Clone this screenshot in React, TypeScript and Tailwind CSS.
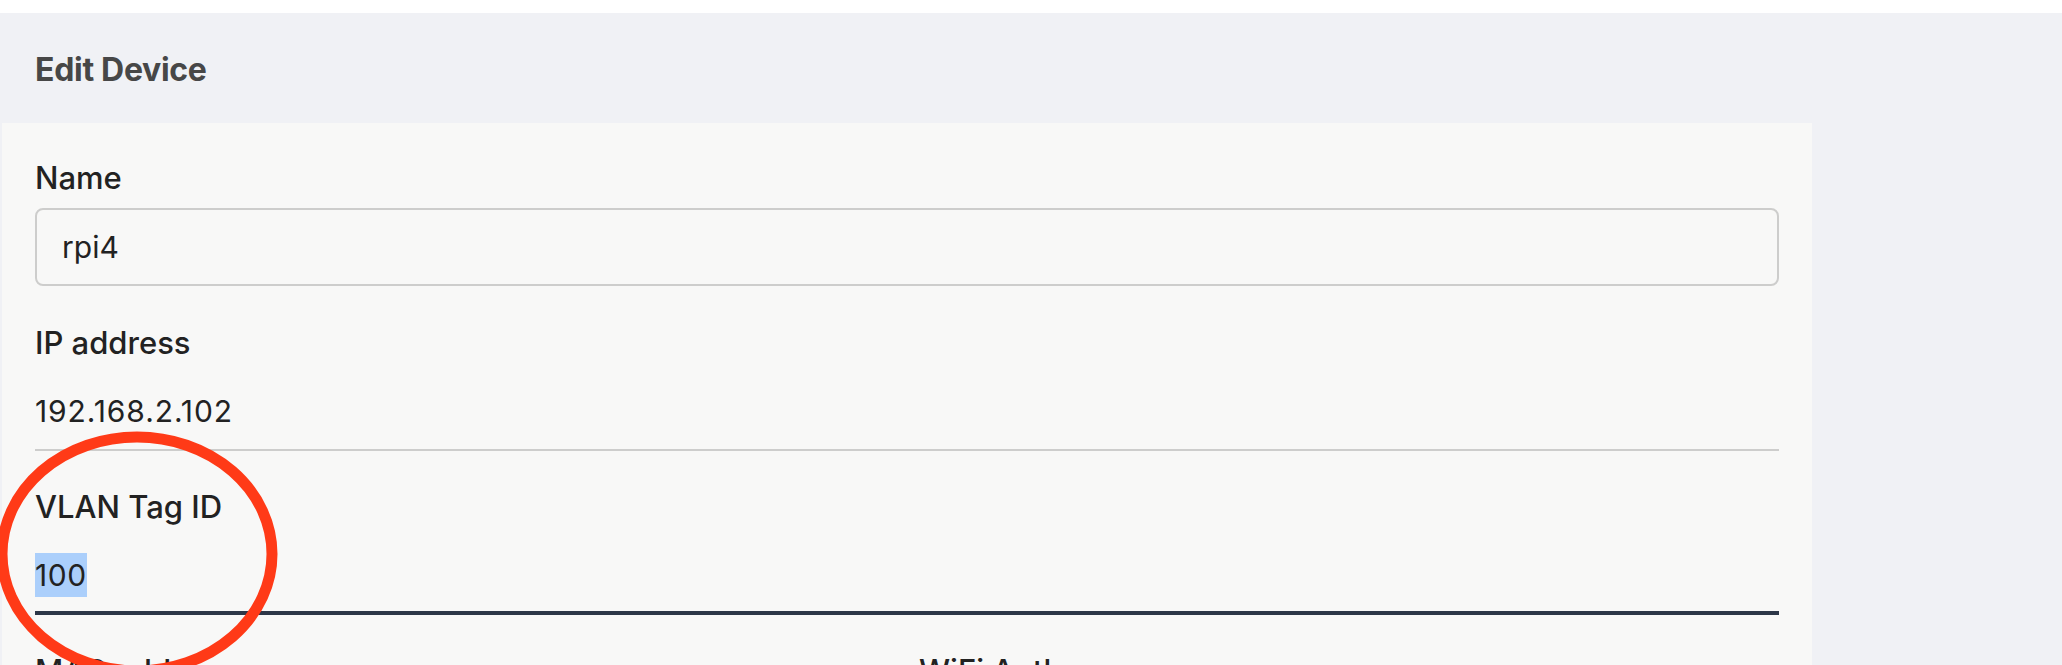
const font = { fontFamily: "Inter, 'Noto Sans', sans-serif" };

function Label({ children }: { children: React.ReactNode }) {
  return <div className="text-[31px] leading-[45px] font-medium text-[#222]">{children}</div>;
}

export default function App() {
  return (
    <div className="relative min-h-screen overflow-hidden bg-white pt-[13px]" style={font}>
      <div className="min-h-[652px] bg-[#f0f1f5]">
        <header className="flex h-[110px] items-center px-[35px] pt-[4px]">
          <h1 className="text-[32px] font-bold tracking-[-0.3px] text-[#474747]">Edit Device</h1>
        </header>

        <section className="ml-[2px] w-[1810px] bg-[#f8f8f7] px-[33px] pt-[32px] pb-10">
          <Label>Name</Label>
          <input
            readOnly
            defaultValue="rpi4"
            className="mt-[8px] block h-[78px] w-full rounded-[8px] border-2 border-[#cdcdcc] bg-transparent px-[25px] text-[30px] text-[#222] outline-none"
          />

          <div className="mt-[34px]">
            <Label>IP address</Label>
            <div className="mt-[24px] border-b-2 border-[#cdcdcc] pb-[15px] text-[30px] leading-[45px] tracking-[0.9px] text-[#222]">
              192.168.2.102
            </div>
          </div>

          <div className="mt-[33px]">
            <Label>VLAN Tag ID</Label>
            <div className="mt-[24px] border-b-4 border-[#2d3748] pb-[13px] text-[30px] leading-[45px] tracking-[0.6px] text-[#222]">
              <span className="bg-[#abcffb] py-[4px]">100</span>
            </div>
          </div>

          <div className="mt-[33px] grid grid-cols-2 gap-x-[24px]">
            <Label>MAC address</Label>
            <Label>WiFi Auth</Label>
          </div>
        </section>
      </div>

      {/* hand-drawn annotation */}
      <svg
        className="pointer-events-none absolute left-0 top-0"
        width="400"
        height="700"
        viewBox="0 0 400 700"
      >
        <ellipse cx="137" cy="554" rx="135" ry="117" fill="none" stroke="#ff3a17" strokeWidth="11" />
      </svg>
    </div>
  );
}
